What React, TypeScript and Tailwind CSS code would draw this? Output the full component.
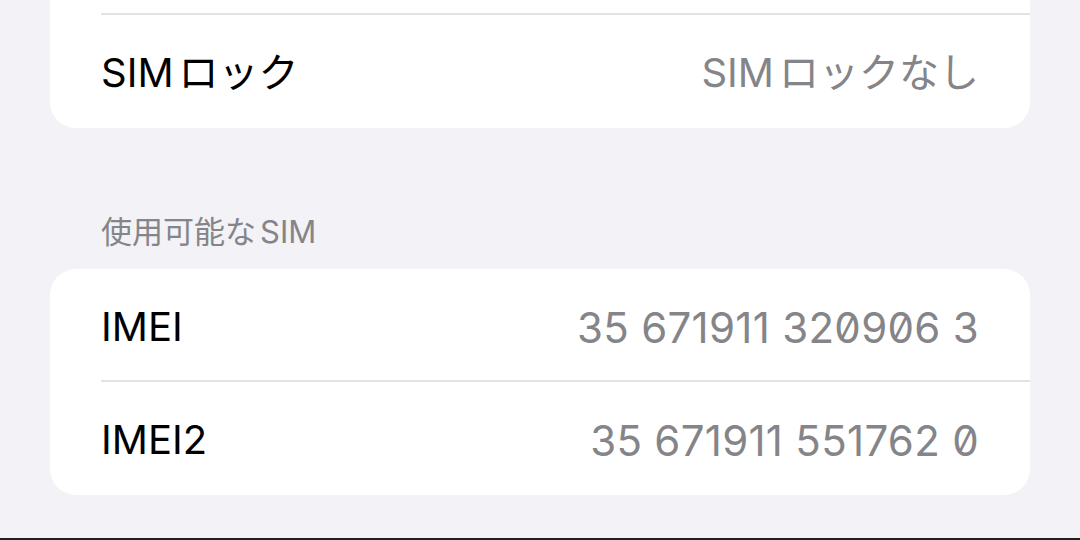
import React from "react";

const font = {
  fontFamily: '"Inter", "Noto Sans CJK JP", sans-serif',
};

// Latin run followed by kana, with the small gap iOS puts between scripts
function Mixed({ latin, rest }: { latin: string; rest: string }) {
  return (
    <span>
      {latin}
      <span className="ml-[5px]">{rest}</span>
    </span>
  );
}

function Row({ label, value, last }: { label: string; value: string; last?: boolean }) {
  return (
    <div className="relative flex h-[113px] items-center justify-between pl-[51px] pr-[51px] pt-[3px]">
      <span className="text-[40px] text-black">{label}</span>
      <span className="text-[42px] tracking-[0.3px] text-[#858589] slashed-zero">{value}</span>
      {!last && <div className="absolute bottom-0 left-[51px] right-0 h-[2px] bg-[#e3e3e6]" />}
    </div>
  );
}

export default function App() {
  return (
    <div className="relative flex h-[540px] w-[1080px] flex-col overflow-hidden bg-[#f2f2f7]" style={font}>
      {/* SIM lock group, scrolled so only its last row shows */}
      <div className="mx-[50px] rounded-b-[26px] bg-white">
        <div className="ml-[51px] h-[15px] border-b-2 border-[#e3e3e6]" />
        <div className="flex h-[113px] items-center justify-between pl-[51px] pr-[51px] pt-[3px]">
          <span className="text-[40px] text-black">
            <Mixed latin="SIM" rest="ロック" />
          </span>
          <span className="text-[40px] text-[#858589]">
            <Mixed latin="SIM" rest="ロックなし" />
          </span>
        </div>
      </div>

      {/* Available SIM group */}
      <div className="pl-[101px] pt-[85px] pb-[18px] text-[31px] leading-[38px] text-[#858589]">
        使用可能な<span className="ml-[4px]">SIM</span>
      </div>
      <div className="mx-[50px] overflow-hidden rounded-[26px] bg-white">
        <Row label="IMEI" value="35 671911 320906 3" />
        <Row label="IMEI2" value="35 671911 551762 0" last />
      </div>

      <div className="absolute bottom-0 left-0 right-0 h-[2px] bg-[#1f1f1f]" />
    </div>
  );
}
